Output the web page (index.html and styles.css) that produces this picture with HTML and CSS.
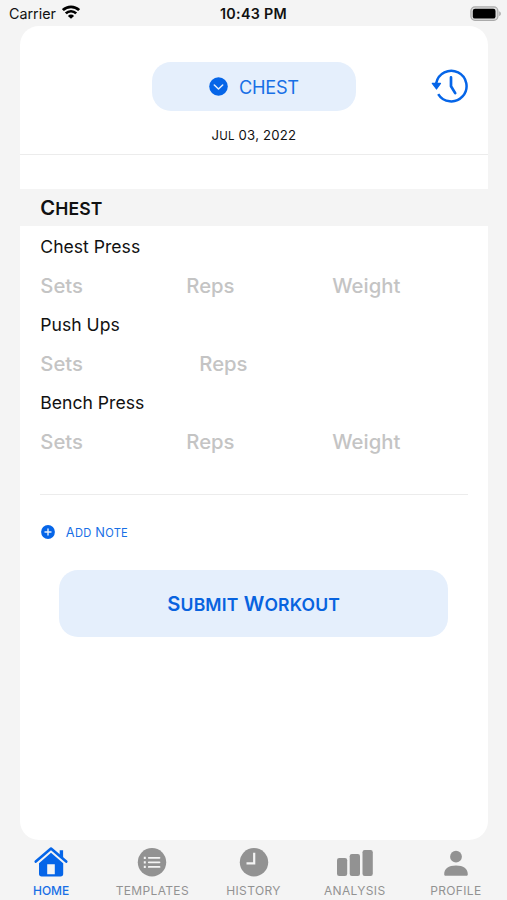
FILE: index.html
```html
<!DOCTYPE html>
<html lang="en">
<head>
<meta charset="utf-8">
<title>Workout</title>
<link rel="stylesheet" href="styles.css">
</head>
<body>
<div class="app">
  <div class="status">
    <div class="carrier"><span>Carrier</span>
      <svg width="18" height="14" viewBox="0 0 18 14" fill="none" stroke="#000" stroke-width="2.7"><path d="M.9 5.100a11.600 11.600 0 0 1 16.200 0M3.800 8.400a7.400 7.400 0 0 1 10.400 0"/><path d="M9 13.800 5.900 10.900a4.400 4.400 0 0 1 6.200 0z" fill="#000" stroke="none"/></svg>
    </div>
    <span class="time">10:43 PM</span>
    <svg class="battery" width="32" height="16" viewBox="0 0 32 16"><rect x=".9" y=".9" width="27" height="13.400" rx="4" fill="#ddd" stroke="#aaa" stroke-width="1.200"/><rect x="2.800" y="2.700" width="22.700" height="9.900" rx="2.200"/><path d="M29.200 5.200c2.200.7 2.200 4.100 0 4.800z" fill="#aaa"/></svg>
  </div>
  <main class="card">
    <header class="head">
      <div class="head-row">
        <button class="picker">
          <svg width="19" height="19" viewBox="0 0 19 19"><circle cx="9.500" cy="9.500" r="9.300" fill="#0565e8"/><path d="m5.300 8 4.200 4 4.200-4" fill="none" stroke="#e5effc" stroke-width="1.500" stroke-linecap="round" stroke-linejoin="round"/></svg>
          <span>CHEST</span>
        </button>
        <svg class="recent" width="38" height="34" viewBox="0 0 38 34" fill="none" stroke="#0565e8" stroke-width="2.500"><path d="M5.200 14.300A15.300 15.300 0 1 1 7.200 25.100"/><path d="M20 8.400v8.900l4.200 6.800" stroke-width="2.700" stroke-linecap="round" stroke-linejoin="round"/><path d="M1.300 14.300H9.500L5.500 20z" fill="#0565e8" stroke-width="1.200" stroke-linejoin="round"/></svg>
      </div>
      <p class="date">J<small>UL</small> 03, 2022</p>
    </header>
    <h2 class="group">C<small>HEST</small></h2>
    <section class="list">
      <h3>Chest Press</h3>
      <div class="fields"><span>Sets</span><span>Reps</span><span>Weight</span></div>
      <h3>Push Ups</h3>
      <div class="fields two"><span>Sets</span><span>Reps</span></div>
      <h3>Bench Press</h3>
      <div class="fields"><span>Sets</span><span>Reps</span><span>Weight</span></div>
    </section>
    <div class="note">
      <svg width="14" height="14" viewBox="0 0 14 14"><circle cx="7" cy="7" r="6.900" fill="#0565e8"/><path d="M7 4v6M4 7h6" stroke="#e5effc" stroke-width="1.400" stroke-linecap="round"/></svg>
      <span>A<small>DD</small> N<small>OTE</small></span>
    </div>
    <button class="submit"><span>S<small>UBMIT</small> W<small>ORKOUT</small></span></button>
  </main>
  <nav class="tabs">
    <a class="tab on"><svg width="34" height="32" viewBox="0 0 34 32"><path d="m1.800 15.600 15.200-13 15.200 13" fill="none" stroke="#0565e8" stroke-width="2.600" stroke-linecap="round" stroke-linejoin="round"/><path d="M25.700 4.300h3.400v8.200l-3.400-2.900z" fill="#0565e8"/><path d="m17 6.700 12.200 10.500v10.500a2.700 2.700 0 0 1-2.700 2.700H7.700A2.700 2.700 0 0 1 5 27.700V17.200z" fill="#0565e8"/><path d="M13.200 18.200h7.600v10h-7.600z" fill="#f4f4f4"/></svg><span>HOME</span></a>
    <a class="tab"><svg width="34" height="32" viewBox="0 0 34 32"><circle cx="17" cy="16.300" r="14.200" fill="#929292"/><path d="M13.800 11.800h10.700M13.800 16.300h10.700M13.800 20.900h10.700" stroke="#f4f4f4" stroke-width="1.800" stroke-linecap="round"/><path d="M8.800 11.800h2M8.800 16.300h2M8.800 20.900h2" stroke="#f4f4f4" stroke-width="2.200"/></svg><span>TEMPLATES</span></a>
    <a class="tab"><svg width="34" height="32" viewBox="0 0 34 32"><circle cx="17" cy="16.300" r="14.200" fill="#929292"/><path d="M17.200 6.800v10.500H9.500" fill="none" stroke="#f4f4f4" stroke-width="2.200"/></svg><span>HISTORY</span></a>
    <a class="tab"><svg width="36" height="32" viewBox="0 0 36 32" fill="#929292"><rect y="12" width="10.200" height="18" rx="2.200"/><rect x="12.700" y="8" width="10.300" height="22" rx="2.200"/><rect x="25.500" y="4" width="10.300" height="26" rx="2.200"/></svg><span>ANALYSIS</span></a>
    <a class="tab"><svg width="34" height="32" viewBox="0 0 34 32" fill="#929292"><circle cx="17" cy="10.700" r="5.900"/><path d="M5.200 28.200C5.200 22.900 9.600 19.500 17 19.500s11.800 3.400 11.800 8.700c0 1-.7 1.500-1.600 1.500H6.800c-.9 0-1.600-.5-1.600-1.500z"/></svg><span>PROFILE</span></a>
  </nav>
</div>
</body>
</html>
```
FILE: styles.css
```css
* { box-sizing: border-box; margin: 0; padding: 0; }
body { background: #f4f4f4; font-family: Inter, "Liberation Sans", sans-serif; color: #111; }
svg { display: block; flex: none; }
button { border: 0; font-family: inherit; }
span { white-space: nowrap; }
.app { width: 507px; height: 900px; display: flex; flex-direction: column; overflow: hidden; }
.status { height: 26px; flex: none; display: grid; grid-template-columns: 1fr auto 1fr; align-items: center; padding: 1px 5px 0 9px; font-size: 14.3px; }
.carrier { display: flex; align-items: center; gap: 6px; }
.carrier svg { margin-top: -3px; }
.time { font-weight: 600; letter-spacing: .3px; margin-right: 4px; }
.battery { justify-self: end; }
.card { height: 814px; flex: none; margin: 0 19.5px 0 20.3px; background: #fff; border-radius: 19px; display: flex; flex-direction: column; }
.head { height: 129px; flex: none; border-bottom: 1.5px solid #ececec; padding-top: 36px; }
.head-row { display: grid; grid-template-columns: 1fr 204px 1fr; align-items: center; }
.picker { grid-column: 2; height: 49px; border-radius: 19px; background: #e5effc; color: #176fe6; display: flex; align-items: center; justify-content: center; gap: 11px; font-size: 18.2px; letter-spacing: -.3px; }
.recent { justify-self: end; margin: -1px 19px 0 0; }
.date { margin-top: 15px; text-align: center; font-size: 13.2px; line-height: 18px; letter-spacing: .2px; }
small { font-size: .87em; }
.group { margin-top: 34px; height: 37px; flex: none; background: #f4f4f4; padding-left: 20px; font-size: 20.2px; line-height: 38px; font-weight: 600; letter-spacing: .1px; }
.list { margin: 0 20px; height: 269px; flex: none; border-bottom: 1.5px solid #ececec; }
.list h3 { height: 39px; line-height: 41px; font-size: 17.6px; font-weight: 400; }
.fields { height: 39px; display: grid; grid-template-columns: 146px 146px 1fr; line-height: 41px; font-size: 20.3px; font-weight: 500; color: #c4c4c4; }
.fields.two { grid-template-columns: 159px 1fr; }
.note { display: flex; align-items: center; gap: 11px; margin: 28px 0 0 20.5px; height: 18px; font-size: 12.8px; letter-spacing: .25px; color: #176fe6; }
.submit { margin: 29px 39.5px 0 39px; height: 67px; border-radius: 19px; background: #e5effc; color: #0863df; font-size: 20.2px; font-weight: 600; letter-spacing: .15px; }
.tabs { flex: 1; display: grid; grid-template-columns: repeat(5, 101.2px); justify-content: center; }
.tab { display: flex; flex-direction: column; align-items: center; padding-top: 6px; font-size: 12px; line-height: 14px; gap: 6px; color: #929292; letter-spacing: .35px; }
.tab.on { color: #176fe6; font-weight: 500; letter-spacing: 0; }
```
